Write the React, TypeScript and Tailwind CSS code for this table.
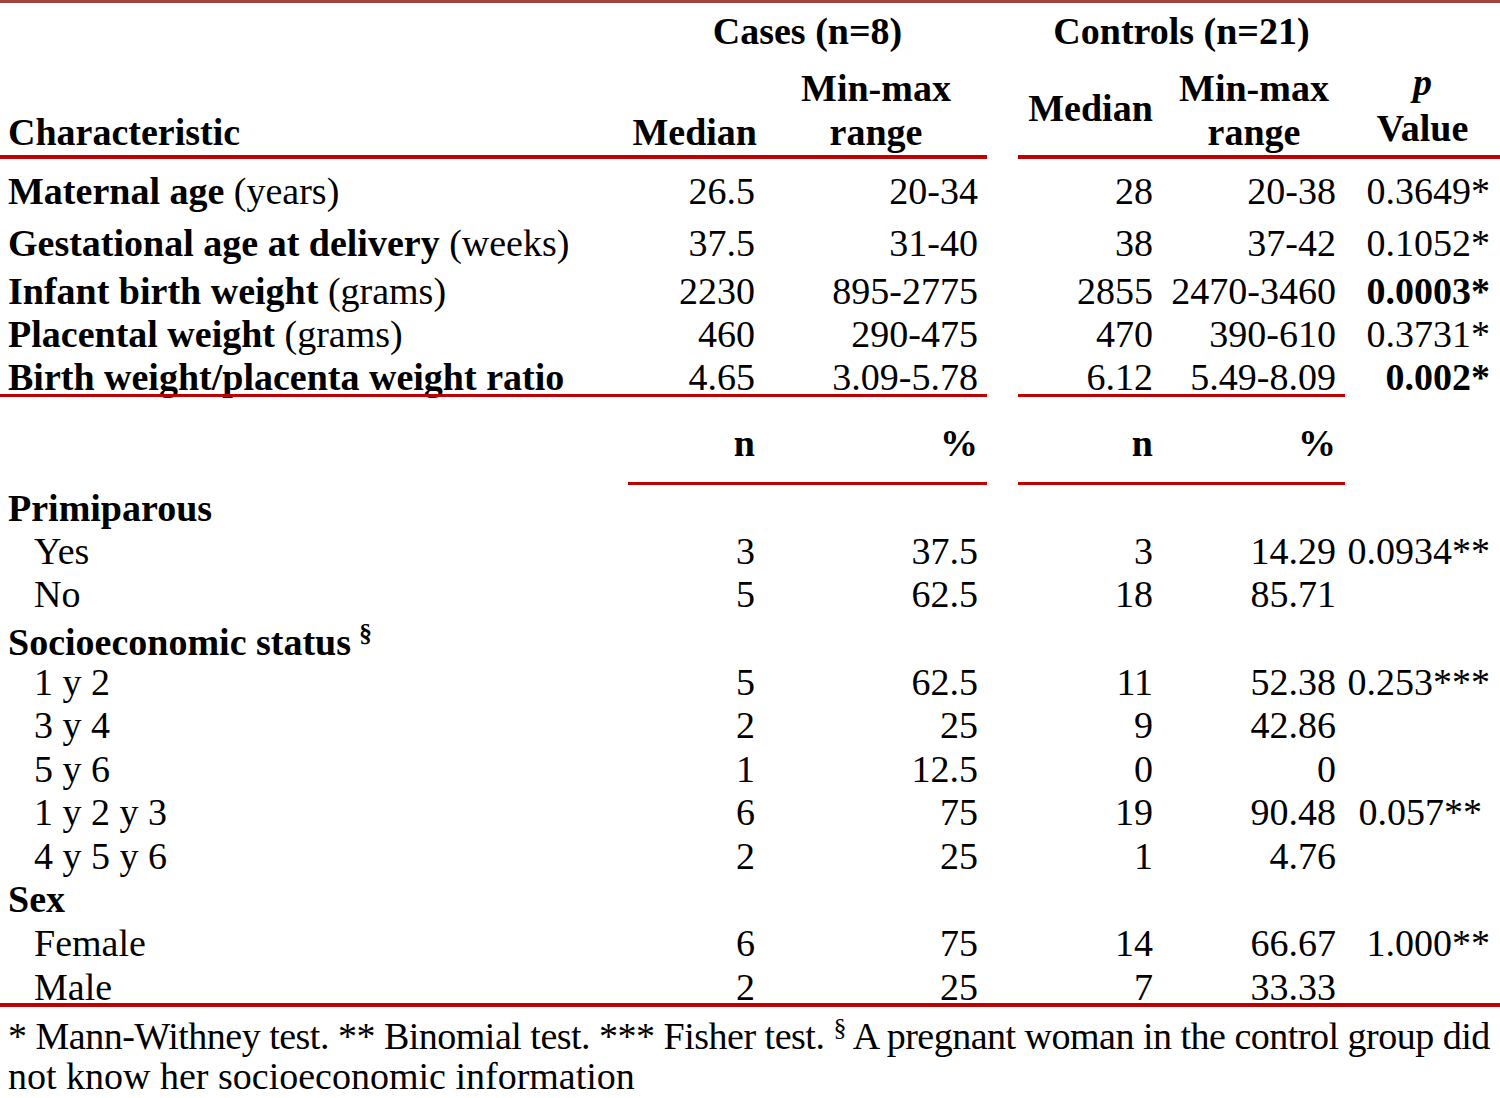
import React from "react";

const COLS = "grid grid-cols-[628px_137px_222px_31px_145px_182px_155px]";

type Vals = [React.ReactNode, React.ReactNode, React.ReactNode, React.ReactNode, React.ReactNode];

function Row({ h, label, v, indent, pClass }: { h: string; label: React.ReactNode; v: Vals; indent?: boolean; pClass?: string }) {
  return (
    <div className={`${COLS} ${h} leading-[44px]`}>
      <div className={`whitespace-nowrap ${indent ? "pl-[34px]" : "pl-[8px]"}`}>{label}</div>
      <div className="text-right pr-[10px]">{v[0]}</div>
      <div className="text-right pr-[9px]">{v[1]}</div>
      <div />
      <div className="text-right pr-[10px]">{v[2]}</div>
      <div className="text-right pr-[9px]">{v[3]}</div>
      <div className={`text-right whitespace-nowrap ${pClass ?? "pr-[10px]"}`}>{v[4]}</div>
    </div>
  );
}

function Label({ b, r }: { b: string; r?: string }) {
  return (
    <>
      <span className="font-bold">{b}</span>
      {r ? <span> {r}</span> : null}
    </>
  );
}

export default function App() {
  return (
    <div className="w-[1500px] h-[1098px] bg-white text-black font-['Liberation_Serif',serif] text-[38px] overflow-hidden">
      <div className="h-[3px] bg-[#a3423f]" />
      {/* header */}
      <div className={`${COLS} grid-rows-[57px_50px_45px] font-bold`}>
        <div className="col-start-2 col-span-2 row-start-1 text-center leading-[57px]">Cases (n=8)</div>
        <div className="col-start-5 col-span-2 row-start-1 text-center leading-[57px]">Controls (n=21)</div>
        <div className="col-start-3 row-start-2 text-center pt-[6px] leading-[44px]">Min-max</div>
        <div className="col-start-6 row-start-2 text-center pt-[6px] leading-[44px]">Min-max</div>
        <div className="col-start-7 row-start-2 text-center leading-[44px] italic">p</div>
        <div className="col-start-1 row-start-3 pl-[8px] leading-[45px]">Characteristic</div>
        <div className="col-start-2 row-start-3 text-right pr-[8px] leading-[45px]">Median</div>
        <div className="col-start-3 row-start-3 text-center leading-[45px]">range</div>
        <div className="col-start-5 row-start-2 row-span-2 flex items-center justify-center leading-[44px]">Median</div>
        <div className="col-start-6 row-start-3 text-center leading-[45px]">range</div>
        <div className="col-start-7 row-start-3 text-center leading-[37px]">Value</div>
      </div>
      <div className="flex h-[4px]">
        <div className="w-[987px] bg-[#c00000]" />
        <div className="w-[31px]" />
        <div className="flex-1 bg-[#c00000]" />
      </div>
      {/* continuous rows */}
      <div className="pt-[10px]">
        <Row h="h-[52px]" label={<Label b="Maternal age" r="(years)" />} v={["26.5", "20-34", "28", "20-38", "0.3649*"]} />
        <Row h="h-[48px]" label={<Label b="Gestational age at delivery" r="(weeks)" />} v={["37.5", "31-40", "38", "37-42", "0.1052*"]} />
        <Row h="h-[43px]" label={<Label b="Infant birth weight" r="(grams)" />} v={["2230", "895-2775", "2855", "2470-3460", <span className="font-bold">0.0003*</span>]} />
        <Row h="h-[43px]" label={<Label b="Placental weight" r="(grams)" />} v={["460", "290-475", "470", "390-610", "0.3731*"]} />
        <Row h="h-[39px]" label={<Label b="Birth weight/placenta weight ratio" />} v={["4.65", "3.09-5.78", "6.12", "5.49-8.09", <span className="font-bold">0.002*</span>]} />
      </div>
      <div className="flex h-[3px]">
        <div className="w-[987px] bg-[#c00000]" />
        <div className="w-[31px]" />
        <div className="w-[327px] bg-[#c00000]" />
      </div>
      {/* n / % header */}
      <div className="pt-[24px]">
        <div className={`${COLS} h-[61px] leading-[44px] font-bold`}>
          <div />
          <div className="text-right pr-[10px]">n</div>
          <div className="text-right pr-[9px]">%</div>
          <div />
          <div className="text-right pr-[10px]">n</div>
          <div className="text-right pr-[9px]">%</div>
          <div />
        </div>
      </div>
      <div className="flex h-[3px]">
        <div className="w-[628px]" />
        <div className="w-[359px] bg-[#c00000]" />
        <div className="w-[31px]" />
        <div className="w-[327px] bg-[#c00000]" />
      </div>
      {/* categorical rows */}
      <div className="pt-[1px]">
        <Row h="h-[43px]" label={<span className="font-bold">Primiparous</span>} v={["", "", "", "", ""]} />
        <Row h="h-[43px]" indent label="Yes" v={["3", "37.5", "3", "14.29", "0.0934**"]} />
        <Row h="h-[48px]" indent label="No" v={["5", "62.5", "18", "85.71", ""]} />
        <Row
          h="h-[40px]"
          label={
            <span className="font-bold">
              Socioeconomic status<sup className="text-[26px] ml-[8px] font-bold">§</sup>
            </span>
          }
          v={["", "", "", "", ""]}
        />
        <Row h="h-[43px]" indent label="1 y 2" v={["5", "62.5", "11", "52.38", "0.253***"]} />
        <Row h="h-[44px]" indent label="3 y 4" v={["2", "25", "9", "42.86", ""]} />
        <Row h="h-[43px]" indent label="5 y 6" v={["1", "12.5", "0", "0", ""]} />
        <Row h="h-[44px]" indent label="1 y 2 y 3" v={["6", "75", "19", "90.48", "0.057**"]} pClass="pr-[18px]" />
        <Row h="h-[43px]" indent label="4 y 5 y 6" v={["2", "25", "1", "4.76", ""]} />
        <Row h="h-[44px]" label={<span className="font-bold">Sex</span>} v={["", "", "", "", ""]} />
        <Row h="h-[44px]" indent label="Female" v={["6", "75", "14", "66.67", "1.000**"]} />
        <Row h="h-[38px]" indent label="Male" v={["2", "25", "7", "33.33", ""]} />
      </div>
      <div className="h-[4px] bg-[#c00000]" />
      <div className="pt-[7px] pl-[8px] whitespace-nowrap">
        <div className="tracking-[-0.5px] leading-[45px]">
          * Mann-Withney test. ** Binomial test. *** Fisher test. <sup className="text-[26px]">§</sup> A pregnant woman in the control group did
        </div>
        <div className="leading-[34px]">not know her socioeconomic information</div>
      </div>
    </div>
  );
}
